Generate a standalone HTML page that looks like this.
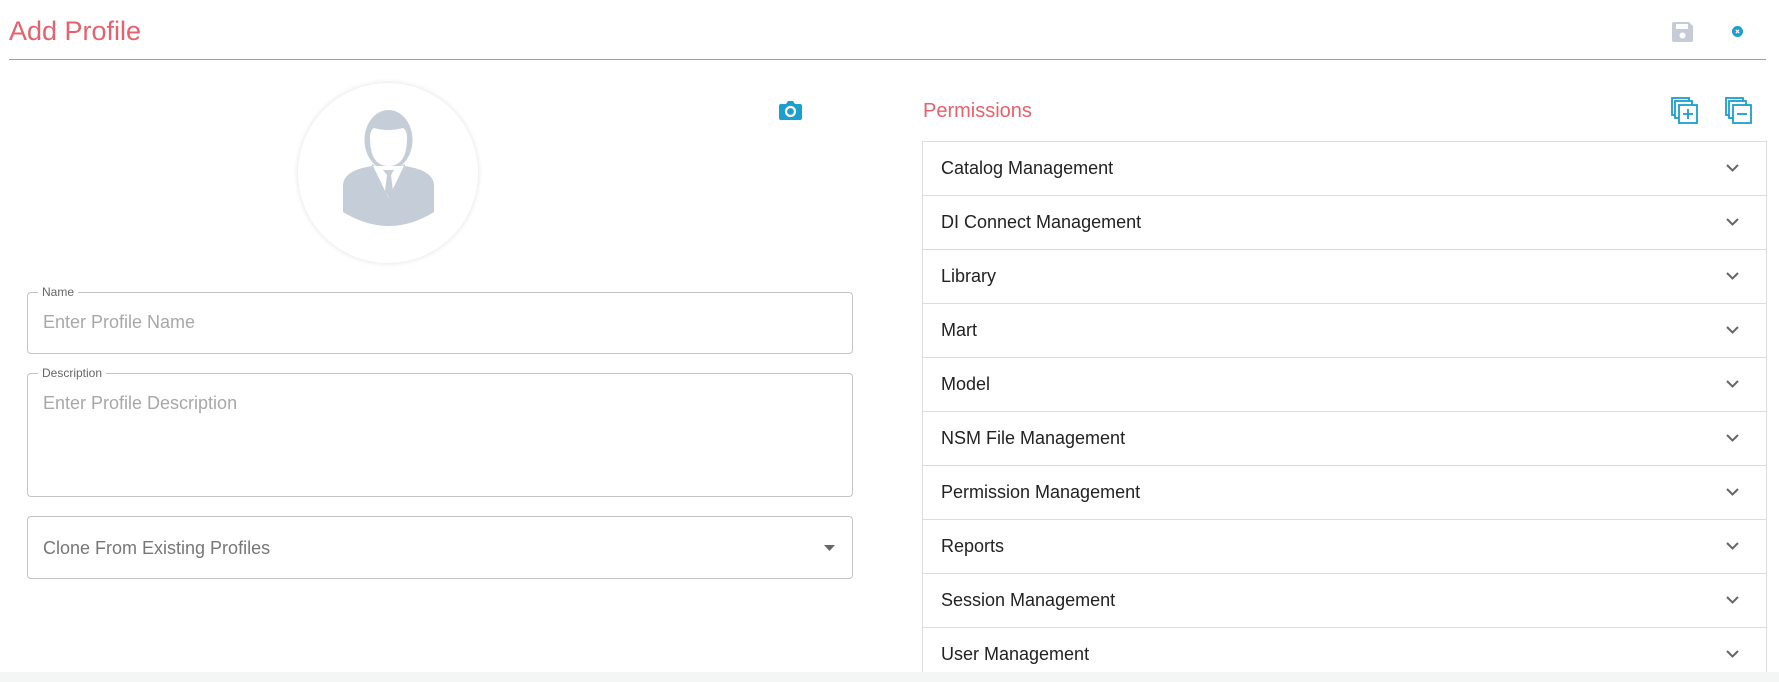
<!DOCTYPE html>
<html><head><meta charset="utf-8"><style>
*{box-sizing:border-box;margin:0;padding:0}
body{width:1779px;height:682px;background:#fff;font-family:"Liberation Sans",sans-serif;position:relative;overflow:hidden}
.abs{position:absolute}
.title{left:9px;top:16px;font-size:27px;color:#e8606c}
.hline{left:9px;top:59px;width:1757px;height:1px;background:#f0883e}
.field{position:absolute;left:27px;width:826px;border:1px solid #c4c4c4;border-radius:4px}
.lbl{position:absolute;left:10px;top:-8px;background:#fff;padding:0 4px;font-size:12px;color:#666}
.ph{position:absolute;left:15px;font-size:18px;color:#a8a8a8}
.list{left:922px;top:141px;width:845px;height:531px;border:1px solid #ddd;border-bottom:none;overflow:hidden}
.row{height:54px;border-bottom:1px solid #ddd;position:relative;font-size:18px;color:#222;padding-left:18px;line-height:53px}
.row svg{position:absolute;right:27px;top:22px}
.band{left:0;top:672px;width:1779px;height:10px;background:#f4f6f6}
</style></head><body>
<div class="abs title">Add Profile</div>
<div class="abs hline"></div>
<svg class="abs" style="left:1672px;top:22px" width="21" height="20" viewBox="0 0 21 20"><path d="M2 0h15l4 4v14a2 2 0 0 1-2 2H2a2 2 0 0 1-2-2V2a2 2 0 0 1 2-2z" fill="#c5ccd8"/><rect x="4" y="2" width="12" height="5" fill="#fff"/><circle cx="10.5" cy="13.5" r="3" fill="#fff"/></svg>
<svg class="abs" style="left:1732px;top:26px" width="11" height="11" viewBox="0 0 11 11"><circle cx="5.5" cy="5.5" r="5.5" fill="#1a9fd0"/><path d="M3.8 3.8l3.4 3.4M7.2 3.8l-3.4 3.4" stroke="#fff" stroke-width="1.1"/></svg>

<div class="abs" style="left:298px;top:83px;width:180px;height:180px;border-radius:50%;background:#fff;box-shadow:0 0 6px rgba(0,0,0,0.12)"></div>
<svg class="abs" style="left:343px;top:110px" width="91" height="118" viewBox="0 0 91 118"><ellipse cx="45.5" cy="30" rx="24" ry="30" fill="#c5cdd9"/><path d="M27 28q0-8 4-10q14 4 29 0q4 2 4 10q0 28-18.5 28T27 28z" fill="#fff"/><path d="M29 54q16 10 33 0v4H29z" fill="#c5cdd9"/><path d="M0 76q0-16 30-20h31q30 4 30 20v26q-45 28-91 0z" fill="#c5cdd9"/><path d="M30 56l15.5 32L61 56z" fill="#fff"/><path d="M40 60h11l-3 5 2 16-4 7-4-7 2-16z" fill="#c5cdd9"/></svg>
<svg class="abs" style="left:779px;top:100px" width="23" height="20" viewBox="0 0 23 20"><path d="M2 4h5l2-3h5l2 3h5a2 2 0 0 1 2 2v12a2 2 0 0 1-2 2H2a2 2 0 0 1-2-2V6a2 2 0 0 1 2-2z" fill="#1a9fd0"/><circle cx="11.5" cy="11.5" r="4.5" fill="none" stroke="#fff" stroke-width="2.2"/></svg>

<div class="field" style="top:292px;height:62px"><span class="lbl">Name</span><span class="ph" style="top:19px">Enter Profile Name</span></div>
<div class="field" style="top:373px;height:124px"><span class="lbl">Description</span><span class="ph" style="top:19px">Enter Profile Description</span></div>
<div class="field" style="top:516px;height:63px"><span class="ph" style="top:21px;color:#777">Clone From Existing Profiles</span><svg style="position:absolute;right:17px;top:28px" width="11" height="6"><path d="M0 0h11L5.5 6z" fill="#666"/></svg></div>

<div class="abs" style="left:923px;top:100px;font-size:20px;color:#e8606c">Permissions</div>
<svg class="abs" style="left:1671px;top:97px" width="28" height="27" viewBox="0 0 28 27" fill="none" stroke="#1a9fd0" stroke-width="1.8"><rect x="1" y="1" width="17" height="17"/><rect x="4" y="4" width="17" height="17" fill="#fff"/><rect x="8" y="8" width="18" height="18" fill="#fff"/><path d="M17 12v10M12 17h10"/></svg>
<svg class="abs" style="left:1725px;top:97px" width="28" height="27" viewBox="0 0 28 27" fill="none" stroke="#1a9fd0" stroke-width="1.8"><rect x="1" y="1" width="17" height="17"/><rect x="4" y="4" width="17" height="17" fill="#fff"/><rect x="8" y="8" width="18" height="18" fill="#fff"/><path d="M12 17h10"/></svg>

<div class="abs list">
<div class="row">Catalog Management<svg width="13" height="8"><path d="M1 1l5.5 5.5L12 1" fill="none" stroke="#666" stroke-width="2"/></svg></div>
<div class="row">DI Connect Management<svg width="13" height="8"><path d="M1 1l5.5 5.5L12 1" fill="none" stroke="#666" stroke-width="2"/></svg></div>
<div class="row">Library<svg width="13" height="8"><path d="M1 1l5.5 5.5L12 1" fill="none" stroke="#666" stroke-width="2"/></svg></div>
<div class="row">Mart<svg width="13" height="8"><path d="M1 1l5.5 5.5L12 1" fill="none" stroke="#666" stroke-width="2"/></svg></div>
<div class="row">Model<svg width="13" height="8"><path d="M1 1l5.5 5.5L12 1" fill="none" stroke="#666" stroke-width="2"/></svg></div>
<div class="row">NSM File Management<svg width="13" height="8"><path d="M1 1l5.5 5.5L12 1" fill="none" stroke="#666" stroke-width="2"/></svg></div>
<div class="row">Permission Management<svg width="13" height="8"><path d="M1 1l5.5 5.5L12 1" fill="none" stroke="#666" stroke-width="2"/></svg></div>
<div class="row">Reports<svg width="13" height="8"><path d="M1 1l5.5 5.5L12 1" fill="none" stroke="#666" stroke-width="2"/></svg></div>
<div class="row">Session Management<svg width="13" height="8"><path d="M1 1l5.5 5.5L12 1" fill="none" stroke="#666" stroke-width="2"/></svg></div>
<div class="row">User Management<svg width="13" height="8"><path d="M1 1l5.5 5.5L12 1" fill="none" stroke="#666" stroke-width="2"/></svg></div>
</div>
<div class="abs band"></div>
</body></html>
